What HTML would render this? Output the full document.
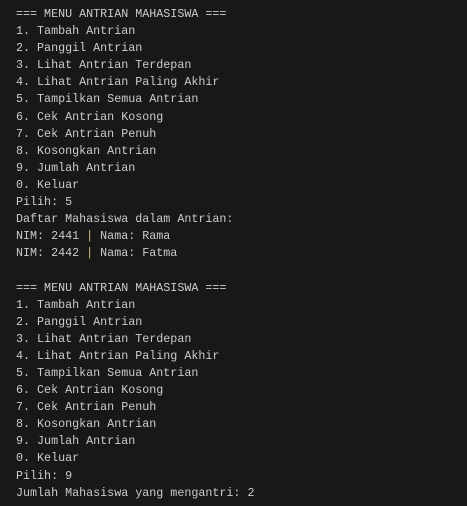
<!DOCTYPE html>
<html><head><meta charset="utf-8"><style>
html,body{margin:0;padding:0;background:#181818;}
body{width:467px;height:506px;overflow:hidden;}
pre{margin:0;position:absolute;left:16px;top:6px;font-family:"Liberation Mono",monospace;font-size:11.7px;line-height:17.1px;color:#cccccc;}
.y{color:#d7ba7d;}
</style></head><body><pre>=== MENU ANTRIAN MAHASISWA ===
1. Tambah Antrian
2. Panggil Antrian
3. Lihat Antrian Terdepan
4. Lihat Antrian Paling Akhir
5. Tampilkan Semua Antrian
6. Cek Antrian Kosong
7. Cek Antrian Penuh
8. Kosongkan Antrian
9. Jumlah Antrian
0. Keluar
Pilih: 5
Daftar Mahasiswa dalam Antrian:
NIM: 2441 <span class="y">|</span> Nama: Rama
NIM: 2442 <span class="y">|</span> Nama: Fatma

=== MENU ANTRIAN MAHASISWA ===
1. Tambah Antrian
2. Panggil Antrian
3. Lihat Antrian Terdepan
4. Lihat Antrian Paling Akhir
5. Tampilkan Semua Antrian
6. Cek Antrian Kosong
7. Cek Antrian Penuh
8. Kosongkan Antrian
9. Jumlah Antrian
0. Keluar
Pilih: 9
Jumlah Mahasiswa yang mengantri: 2</pre></body></html>
